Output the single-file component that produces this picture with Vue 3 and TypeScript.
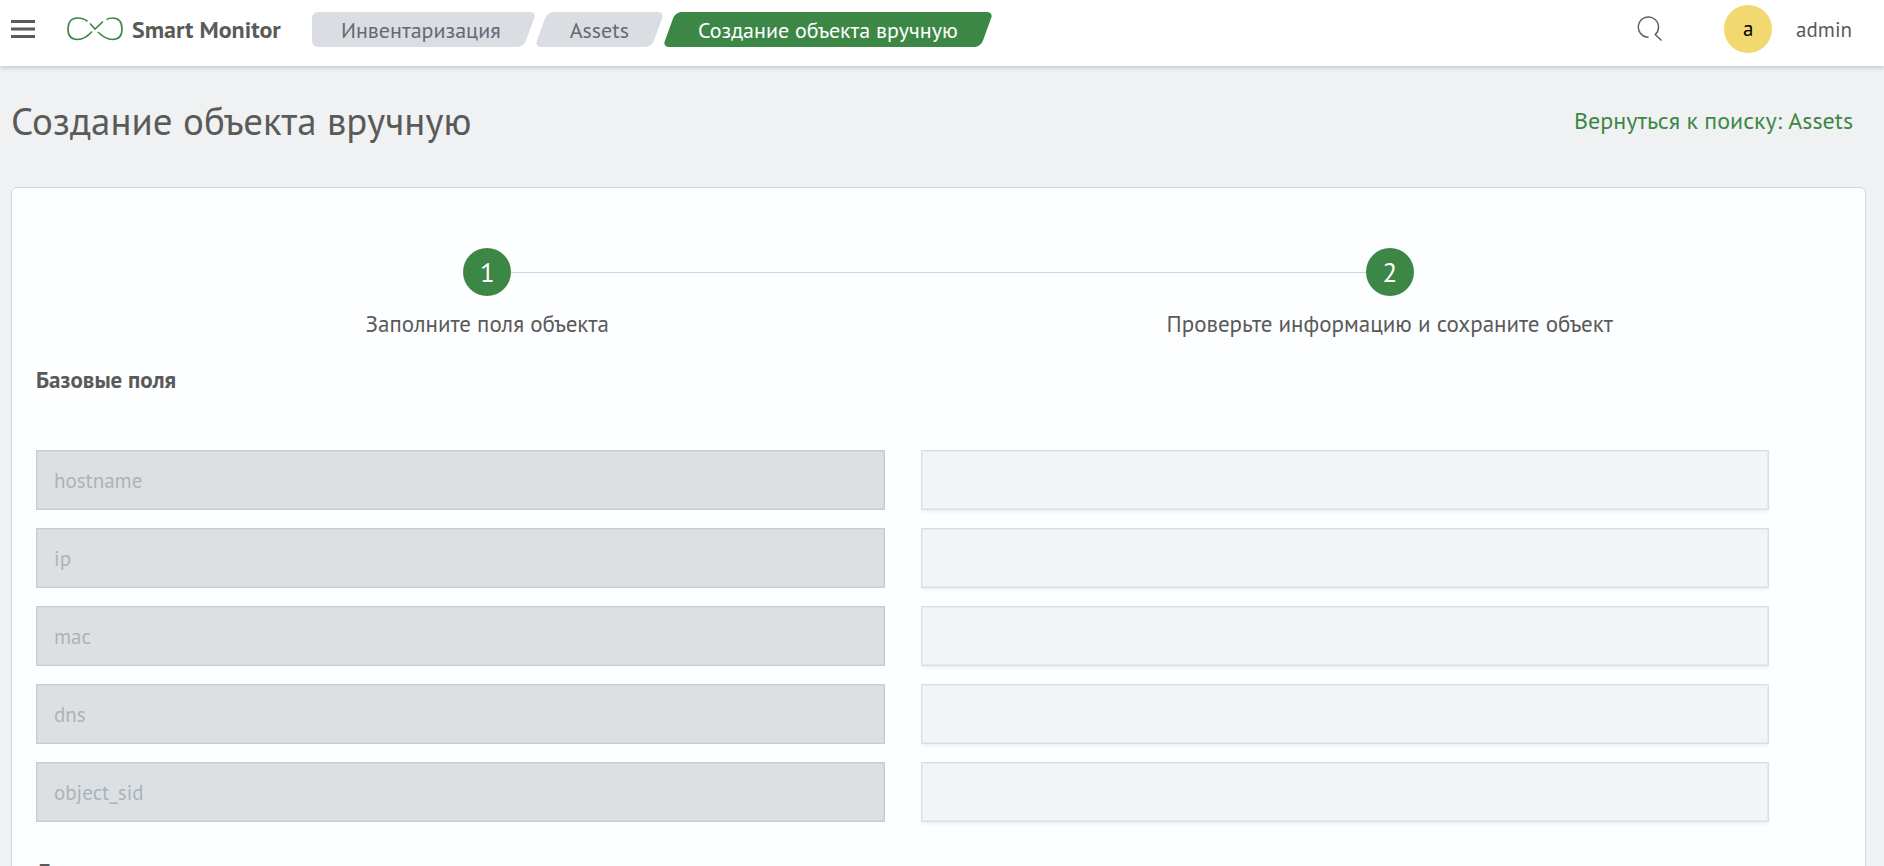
<script setup lang="ts">
import { reactive } from 'vue'

interface Crumb {
  label: string
  current?: boolean
}

interface Field {
  name: string
  value: string
}

const crumbs: Crumb[] = [
  { label: 'Инвентаризация' },
  { label: 'Assets' },
  { label: 'Создание объекта вручную', current: true },
]

const steps: string[] = ['Заполните поля объекта', 'Проверьте информацию и сохраните объект']

const fields = reactive<Field[]>(
  ['hostname', 'ip', 'mac', 'dns', 'object_sid'].map((name) => ({ name, value: '' })),
)
</script>

<template>
  <div class="app">
    <header class="header">
      <button class="icon-button" type="button" aria-label="Меню">
        <svg width="24" height="18" viewBox="0 0 24 18" aria-hidden="true">
          <path d="M0 1.5h24M0 9h24M0 16.5h24" stroke="#5a5a59" stroke-width="3" />
        </svg>
      </button>
      <a class="brand" href="#">
        <svg class="logo" width="56" height="24" viewBox="0 0 56 24" fill="none" aria-hidden="true">
          <path
            d="M20.5 4.3C17.5 2 14 1 10.500 1C4.500 1 1 5 1 12C1 19 4.500 22.500 10.500 22.500C16 22.500 20.500 19.500 25 14.500M23 6.500L28 12L36 4.500M39.500 2.500C41.500 1.300 43.500 1 45.500 1C51.500 1 55 5 55 12C55 19 51.500 22.500 45.500 22.500C40 22.500 35.500 19.500 31 15"
            stroke="#3c8746"
            stroke-width="1.6"
          />
        </svg>
        <span class="header-text">Smart Monitor</span>
      </a>
      <nav aria-label="Навигация">
        <ol class="crumbs">
          <li v-for="crumb in crumbs" :key="crumb.label">
            <a class="crumb" :class="{ current: crumb.current }" href="#">
              <span>{{ crumb.label }}</span>
            </a>
          </li>
        </ol>
      </nav>
      <div class="tools">
        <button class="icon-button" type="button" aria-label="Поиск">
          <svg width="26" height="26" viewBox="0 0 26 26" fill="none" aria-hidden="true">
            <path
              d="M11.500 21.200A10.100 10.100 0 1 1 18.200 18.600L24.500 24.500M18.200 18.600A10.100 10.100 0 0 0 21.500 11"
              stroke="#5a5a59"
              stroke-width="1.4"
            />
          </svg>
        </button>
        <a class="user" href="#">
          <span class="avatar">a</span>
          <span class="header-text">admin</span>
        </a>
      </div>
    </header>

    <main class="main">
      <div class="title-row">
        <h1>Создание объекта вручную</h1>
        <a class="back" href="#">Вернуться к поиску: Assets</a>
      </div>

      <form class="card">
        <ol class="steps">
          <li v-for="(step, i) in steps" :key="step" class="step">
            <span class="number">{{ i + 1 }}</span>
            <span>{{ step }}</span>
          </li>
        </ol>

        <h2>Базовые поля</h2>
        <div class="fields">
          <template v-for="field in fields" :key="field.name">
            <input class="field" type="text" :placeholder="field.name" :aria-label="'Поле ' + field.name" disabled />
            <input v-model="field.value" class="field" type="text" :aria-label="field.name" />
          </template>
        </div>

        <h2>Дополнительные поля</h2>
      </form>
    </main>
  </div>
</template>

<style>
body {
  margin: 0;
}
</style>

<style scoped>
.app {
  display: flex;
  flex-direction: column;
  height: 100vh;
  background: #f0f1f3;
  color: #5a5a59;
  font-family: 'PT Sans', 'Noto Sans', sans-serif;
  font-size: 23px;
  line-height: 32px;
}

a {
  color: inherit;
  text-decoration: none;
}

ol {
  display: flex;
  margin: 0;
  padding: 0;
  list-style: none;
}

.header {
  position: relative;
  z-index: 1;
  display: flex;
  flex: none;
  align-items: center;
  box-sizing: border-box;
  height: 66px;
  padding: 0 32px 8px 11px;
  background: #fff;
  box-shadow: 0 1px 5px rgba(120, 140, 150, 0.5);
  font-size: 21px;
}

.header-text {
  padding-top: 2px;
}

.icon-button {
  display: flex;
  padding: 0;
  border: 0;
  background: none;
  cursor: pointer;
}

.brand {
  display: flex;
  align-items: center;
  gap: 9px;
  width: 245px;
  margin-left: 32px;
  font-size: 24px;
  font-weight: 700;
  white-space: nowrap;
}

.crumbs {
  gap: 11px;
}

.crumb {
  position: relative;
  display: block;
  padding: 1px 29px 0;
  color: #636a72;
  font-size: 22px;
  line-height: 34px;
  white-space: nowrap;
}

.crumb::before {
  position: absolute;
  inset: 0;
  border-radius: 6px;
  background: #dadde2;
  content: '';
  transform: skewX(-20deg);
}

li:first-child > .crumb::after {
  position: absolute;
  inset: 0 50% 0 0;
  border-radius: 6px 0 0 6px;
  background: #dadde2;
  content: '';
}

li:first-child > .crumb::before {
  left: 20px;
}

.crumb > span {
  position: relative;
  z-index: 1;
}

.crumb.current {
  color: #fff;
  font-weight: 500;
}

.crumb.current::before {
  background: #3c8746;
}

.tools {
  display: flex;
  align-items: center;
  gap: 61px;
  margin-left: auto;
}

.user {
  display: flex;
  align-items: center;
  gap: 24px;
}

.avatar {
  width: 48px;
  border-radius: 50%;
  background: #f1d86f;
  color: #000;
  line-height: 48px;
  text-align: center;
}

.main {
  flex: 1;
  min-height: 0;
  padding: 0 18px 0 11px;
  overflow-y: auto;
  scrollbar-width: none;
}

.title-row {
  display: flex;
  align-items: center;
  justify-content: space-between;
  height: 110px;
  padding-right: 13px;
}

h1 {
  margin: 0;
  font-size: 39px;
  font-weight: 400;
  line-height: 48px;
}

.back {
  color: #3c8746;
  font-size: 24px;
}

.card {
  margin-top: 11px;
  padding: 60px 24px;
  border: 1px solid #d3d7db;
  border-radius: 6px;
  background: #fdfeff;
}

.step {
  position: relative;
  display: flex;
  flex: 1;
  flex-direction: column;
  align-items: center;
  gap: 12px;
}

.step + .step::before {
  position: absolute;
  top: 24px;
  right: calc(50% + 24px);
  left: calc(-50% + 24px);
  height: 1px;
  background: #d3d7db;
  content: '';
}

.number {
  width: 48px;
  border-radius: 50%;
  background: #3c8746;
  color: #fff;
  font-size: 27px;
  line-height: 48px;
  text-align: center;
}

h2 {
  margin: 24px 0 54px;
  font-size: 23px;
  font-weight: 700;
  line-height: 32px;
}

.fields {
  display: grid;
  grid-template-columns: 1fr 1fr;
  gap: 18px 36px;
  margin: 0 72px 34px 0;
}

.field {
  box-sizing: border-box;
  width: 100%;
  height: 60px;
  padding: 0 17px;
  border: 1px solid #d9e0e3;
  border-radius: 0;
  outline: none;
  background: #f3f4f6;
  box-shadow: inset 0 0 0 1px #e5eaec, 0 3px 3px -1px rgba(150, 160, 170, 0.16);
  color: #5a5a59;
  font: inherit;
  font-size: 21px;
}

.field:disabled {
  border-color: #c5cdd4;
  background: #dce0e3;
  box-shadow: inset 0 0 0 1px #d3d8dc;
}

.field::placeholder {
  color: #abb3ba;
  opacity: 1;
}
</style>
